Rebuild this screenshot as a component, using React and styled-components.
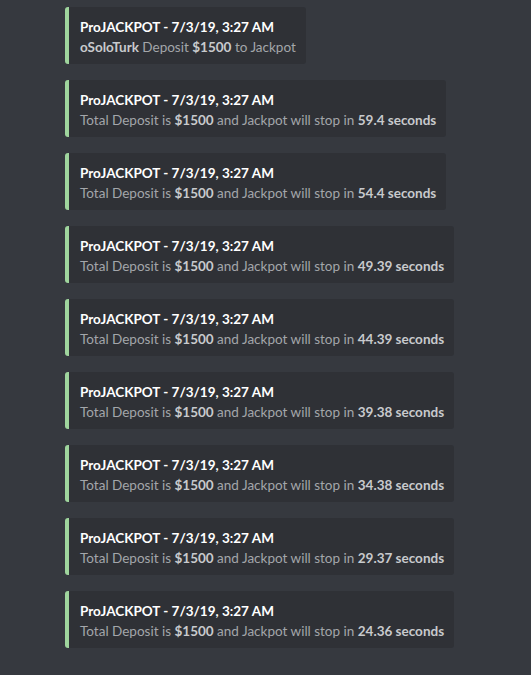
import React from "react";
import styled, { createGlobalStyle } from "styled-components";

const GlobalStyle = createGlobalStyle`
  html, body {
    margin: 0;
    padding: 0;
    background: #36393f;
  }
  body {
    font-family: Lato, "Open Sans", "Liberation Sans", sans-serif;
  }
`;

const Feed = styled.div`
  min-height: 675px;
  box-sizing: border-box;
  padding: 7px 0 0 65px;
  display: flex;
  flex-direction: column;
  align-items: flex-start;
  gap: 16px;
  background: #36393f;
`;

const Embed = styled.div`
  display: flex;
  flex-direction: column;
  background: #2f3136;
  border-left: 4px solid #9fd59d;
  border-radius: 3px;
  padding: 10px 10px 7px 11px;
`;

const Title = styled.div`
  color: #ffffff;
  font-size: 13.5px;
  font-weight: 700;
  line-height: 20px;
`;

const Desc = styled.div`
  color: #a3a6aa;
  font-size: 13.5px;
  line-height: 20px;
  white-space: nowrap;

  b {
    color: #c8cacd;
    font-weight: 700;
  }
`;

const stamps = ["59.4", "54.4", "49.39", "44.39", "39.38", "34.38", "29.37", "24.36"];

export default function App() {
  return (
    <>
      <GlobalStyle />
      <Feed>
        <Embed>
          <Title>ProJACKPOT - 7/3/19, 3:27 AM</Title>
          <Desc>
            <b>oSoloTurk</b> Deposit <b>$1500</b> to Jackpot
          </Desc>
        </Embed>
        {stamps.map((s) => (
          <Embed key={s}>
            <Title>ProJACKPOT - 7/3/19, 3:27 AM</Title>
            <Desc>
              Total Deposit is <b>$1500</b> and Jackpot will stop in <b>{s} seconds</b>
            </Desc>
          </Embed>
        ))}
      </Feed>
    </>
  );
}
